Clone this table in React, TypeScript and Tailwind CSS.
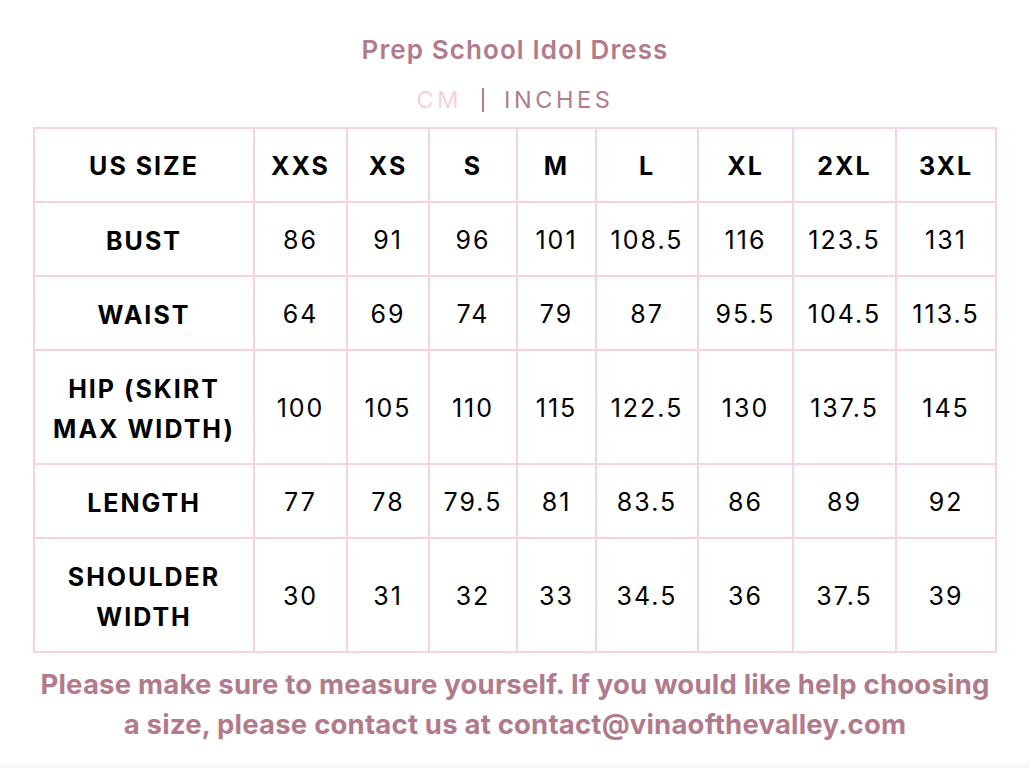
import React from "react";

const sizes = ["XXS", "XS", "S", "M", "L", "XL", "2XL", "3XL"];

const rows: { label: React.ReactNode; values: string[]; tall?: boolean }[] = [
  { label: "BUST", values: ["86", "91", "96", "101", "108.5", "116", "123.5", "131"] },
  { label: "WAIST", values: ["64", "69", "74", "79", "87", "95.5", "104.5", "113.5"] },
  {
    label: (
      <>
        HIP (SKIRT
        <br />
        MAX WIDTH)
      </>
    ),
    values: ["100", "105", "110", "115", "122.5", "130", "137.5", "145"],
    tall: true,
  },
  { label: "LENGTH", values: ["77", "78", "79.5", "81", "83.5", "86", "89", "92"] },
  {
    label: (
      <>
        SHOULDER
        <br />
        WIDTH
      </>
    ),
    values: ["30", "31", "32", "33", "34.5", "36", "37.5", "39"],
    tall: true,
  },
];

const colWidths = [220, 93, 82, 88, 79, 102, 95, 103, 100];

export default function App() {
  return (
    <div
      className="w-[1030px] h-[768px] bg-white flex flex-col items-center"
      style={{ fontFamily: "Inter, 'Noto Sans', sans-serif" }}
    >
      <h1 className="mt-[34px] text-[26px] leading-[32px] font-semibold tracking-[1.1px] text-[#b27b8c]">
        Prep School Idol Dress
      </h1>
      <div className="mt-[16px] h-[36px] flex items-center text-[23.5px] tracking-[3.6px] text-[#b27b8c]">
        <span className="text-[#f8cfdc]">CM</span>
        <span className="ml-[20px] mr-[20px] w-[2px] h-[24px] bg-[#b27b8c]" />
        <span>INCHES</span>
      </div>
      <table className="mt-[9px] table-fixed border-collapse w-[962px] text-[25px] tracking-[2px] text-black">
        <colgroup>
          {colWidths.map((w, i) => (
            <col key={i} style={{ width: w }} />
          ))}
        </colgroup>
        <thead>
          <tr className="h-[74px] font-bold">
            <th className="border-2 border-[#f6d3df] font-bold pt-[3px]">US SIZE</th>
            {sizes.map((s) => (
              <th key={s} className="border-2 border-[#f6d3df] font-bold pt-[3px]">
                {s}
              </th>
            ))}
          </tr>
        </thead>
        <tbody>
          {rows.map((r, i) => (
            <tr key={i} className={r.tall ? "h-[114px]" : "h-[74px]"}>
              <td className="border-2 border-[#f6d3df] text-center font-bold leading-[40px] pt-[3px]">
                {r.label}
              </td>
              {r.values.map((v, j) => (
                <td key={j} className="border-2 border-[#f6d3df] text-center pt-[3px]">
                  {v}
                </td>
              ))}
            </tr>
          ))}
        </tbody>
      </table>
      <p className="mt-[11px] w-[1020px] whitespace-nowrap text-center text-[27.5px] leading-[40px] font-bold tracking-[0.2px] text-[#b27b8c]">
        Please make sure to measure yourself. If you would like help choosing
        <br />
        a size, please contact us at contact@vinaofthevalley.com
      </p>
      <div className="mt-auto w-full h-[4px] bg-[#f7f8fa]" />
    </div>
  );
}
